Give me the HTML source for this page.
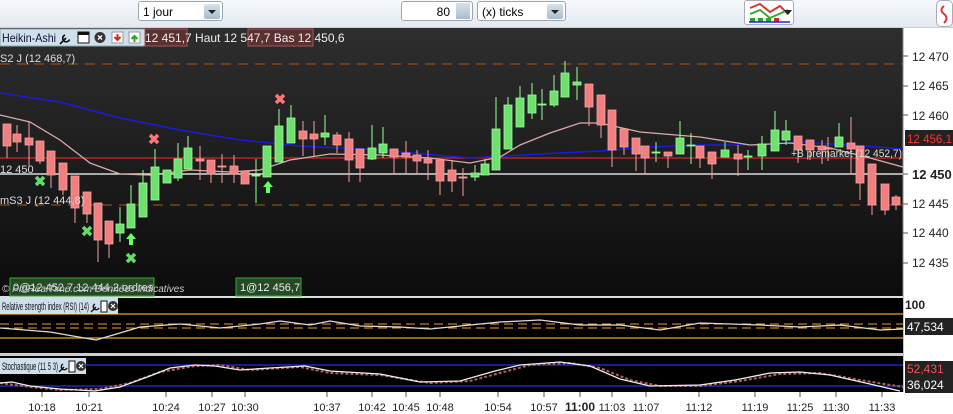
<!DOCTYPE html>
<html><head><meta charset="utf-8"><style>
body{margin:0;width:953px;height:414px;overflow:hidden;background:#fff;font-family:"Liberation Sans",sans-serif;position:relative}
.tb{position:absolute;left:0;top:0;width:953px;height:28px;background:linear-gradient(#f6f9fc,#e3e9ef);border-bottom:1px solid #c8d0d8;box-sizing:border-box}
.sel{position:absolute;top:1px;height:20px;background:#fff;border:1px solid #9aa7b3;border-radius:3px;font-size:12px;line-height:20px;padding-left:4px;box-sizing:border-box}
.arr{position:absolute;right:2px;top:2px;width:16px;height:15px;background:linear-gradient(#d6e2ec,#a9bccc);border-radius:2px}
.arr:after{content:"";position:absolute;left:4px;top:6px;border:4px solid transparent;border-top:4px solid #222;border-bottom:none}
svg{position:absolute;left:0;top:0}
</style></head><body>
<div class="tb"></div>
<div class="sel" style="left:138px;width:85px">1 jour<div class="arr"></div></div>
<div class="sel" style="left:401px;width:72px;text-align:right;padding-right:22px">80<div style="position:absolute;right:2px;top:1px;width:14px;height:16px;background:linear-gradient(#d6e2ec,#a9bccc)"></div></div>
<div class="sel" style="left:477px;width:89px">(x) ticks<div class="arr"></div></div>
<div style="position:absolute;left:744px;top:0;width:50px;height:25px;background:#fff;border:1px solid #aab;border-radius:3px;box-sizing:border-box"></div>
<div style="position:absolute;left:936px;top:0;width:17px;height:27px;background:#fff;border:1px solid #aab;border-radius:5px;box-sizing:border-box"></div>
<svg id="s" width="953" height="414" xmlns="http://www.w3.org/2000/svg">
<defs><linearGradient id="bg" x1="0" y1="0" x2="0" y2="1"><stop offset="0" stop-color="#2e2e2e"/><stop offset="1" stop-color="#0c0c0c"/></linearGradient></defs>
<g>
<path d="M750 8 L760 4 L770 12 L780 6 L788 14" fill="none" stroke="#d33" stroke-width="2"/>
<path d="M750 14 L760 10 L770 18 L788 10" fill="none" stroke="#3a3" stroke-width="2"/>
<rect x="750" y="18" width="5" height="4" fill="#2a2"/><rect x="758" y="18" width="5" height="4" fill="#2a2"/><rect x="766" y="18" width="5" height="4" fill="#2a2"/><rect x="774" y="18" width="5" height="4" fill="#d22"/>
<line x1="749" y1="22" x2="790" y2="22" stroke="#22d" stroke-width="1.5"/>
<path d="M784 10 l8 0 l-4 5z" fill="#222"/>
<path d="M944 6 q-5 4 0 8 q5 4 0 9" fill="none" stroke="#d33" stroke-width="2"/>
</g>
<rect x="0" y="28" width="903" height="268" fill="url(#bg)"/>
<rect x="903" y="28" width="50" height="386" fill="#fff"/>
<line x1="903" y1="28" x2="903" y2="392" stroke="#888"/>
<g stroke="#555"><line x1="903" y1="56" x2="908" y2="56"/><line x1="903" y1="86" x2="908" y2="86"/><line x1="903" y1="115" x2="908" y2="115"/><line x1="903" y1="174" x2="908" y2="174"/><line x1="903" y1="204" x2="908" y2="204"/><line x1="903" y1="233" x2="908" y2="233"/><line x1="903" y1="263" x2="908" y2="263"/></g>
<rect x="0" y="296" width="903" height="96" fill="#000"/>
<rect x="0" y="296" width="903" height="2" fill="#ddd"/>
<rect x="0" y="353" width="903" height="3" fill="#ccc"/>
<rect x="0" y="392" width="953" height="22" fill="#fff"/>
<line x1="0" y1="64" x2="903" y2="64" stroke="#a85a10" stroke-dasharray="10,7"/>
<line x1="0" y1="205" x2="903" y2="205" stroke="#a85a10" stroke-dasharray="10,7"/>
<line x1="0" y1="158" x2="903" y2="158" stroke="#e02020" stroke-width="1.3"/>
<line x1="0" y1="174" x2="903" y2="174" stroke="#fff" stroke-width="1.3"/>
<polyline fill="none" stroke="#1a1ae0" stroke-width="1.5" points="0,93 60,102 120,118 180,130 240,140 300,146 380,150 470,158 540,154 600,151 650,147 700,145 760,145 800,142 850,145 903,149"/>
<polyline fill="none" stroke="#d9aaa8" stroke-width="1.3" points="0,115 30,122 60,140 90,163 120,174 150,175 190,170 230,172 260,170 290,160 330,154 380,155 430,158 470,163 500,157 520,145 550,133 580,123 600,123 640,132 700,137 750,145 790,143 830,148 870,158 903,167"/>
<g id="c"></g>
<g font-size="11" fill="#ddd">
<text x="0" y="62">S2 J (12 468,7)</text>
<text x="0" y="173">12 450</text>
<text x="0" y="204">mS3 J (12 444,8)</text>
<text x="791" y="157" textLength="111" lengthAdjust="spacingAndGlyphs">+B premarket (12 452,7)</text>
</g>
<rect x="0" y="29" width="145" height="17" fill="#cfe0ec" stroke="#8aa"/>
<text x="2" y="42" font-size="12" fill="#113" textLength="54" lengthAdjust="spacingAndGlyphs">Heikin-Ashi</text>
<g>
<path d="M60 44 l6 -6 m-1 -3 a3.5 3.5 0 1 0 4.5 4.5" stroke="#111" stroke-width="1.6" fill="none"/>
<rect x="78" y="32" width="11" height="11" fill="#fff" stroke="#111"/><rect x="78" y="32" width="11" height="3" fill="#111"/>
<circle cx="100" cy="37.5" r="5.5" fill="#333"/><path d="M98 35.5l4 4m0-4l-4 4" stroke="#fff" stroke-width="1.3"/>
<rect x="112" y="32" width="11" height="11" fill="#fff" stroke="#999"/><path d="M117.5 34v6m-3-3l3 3 3-3" stroke="#d22" stroke-width="2" fill="none"/>
<rect x="129" y="32" width="11" height="11" fill="#fff" stroke="#999"/><path d="M134.5 42v-6m-3 3l3-3 3 3" stroke="#2a2" stroke-width="2" fill="none"/>
</g>
<rect x="145" y="29" width="42" height="17" fill="#5a3030" stroke="#a55"/>
<rect x="248" y="29" width="65" height="17" fill="#5a3030" stroke="#a55"/>
<text x="145" y="42" font-size="12" fill="#eee">12 451,7 Haut 12 547,7 Bas 12 450,6</text>
<g font-size="12" fill="#222">
<text x="912" y="61">12 470</text><text x="912" y="90">12 465</text><text x="912" y="120">12 460</text>
<text x="912" y="179" font-weight="bold" font-size="13">12 450</text><text x="912" y="208">12 445</text><text x="912" y="237">12 440</text><text x="912" y="267">12 435</text>
<text x="905" y="309" font-weight="bold">100</text>
</g>
<rect x="905" y="130" width="48" height="16" fill="#222"/><text x="907" y="143" font-size="12" fill="#f33" textLength="45" lengthAdjust="spacingAndGlyphs">12 456,1</text>
<rect x="10" y="278" width="144" height="18" fill="#264a26" stroke="#3a3"/>
<rect x="236" y="278" width="65" height="18" fill="#264a26" stroke="#3a3"/>
<text x="13" y="291" font-size="11" fill="#dde">0@12 452,7 12 444,2 ordres</text>
<text x="240" y="291" font-size="11" fill="#eee">1@12 456,7</text>
<text x="2" y="292" font-size="10" fill="#ccc" font-style="italic">© ProRealTime.com  Données indicatives</text>
<line x1="0" y1="314" x2="903" y2="314" stroke="#f0a020" stroke-width="1.3"/>
<line x1="0" y1="338" x2="903" y2="338" stroke="#f0a020" stroke-width="1.3"/>
<line x1="0" y1="324" x2="903" y2="324" stroke="#f0a020" stroke-dasharray="9,5"/>
<line x1="0" y1="328" x2="903" y2="328" stroke="#f0a020" stroke-dasharray="9,5"/>
<polyline fill="none" stroke="#ddd" stroke-width="1.3" points="0,328 50,332 96,340 120,333 140,327 180,324 220,328 260,324 280,321 310,325 330,321 360,326 400,327 430,329 470,325 500,322 540,320 580,325 620,325 660,330 700,323 760,325 800,327 840,325 880,330 903,329"/>
<rect x="0" y="298" width="118" height="16" fill="#cfe0ec"/>
<text x="2" y="310" font-size="11" fill="#111" textLength="87" lengthAdjust="spacingAndGlyphs">Relative strength index (RSI) (14)</text>
<g>
<path d="M91 312 l5 -5 m-1 -3 a3 3 0 1 0 4 4" stroke="#111" stroke-width="1.4" fill="none"/>
<rect x="101" y="301" width="6" height="11" fill="#fff" stroke="#111"/>
<circle cx="113" cy="306" r="5" fill="#333"/><path d="M111 304l4 4m0-4l-4 4" stroke="#fff" stroke-width="1.2"/>
</g>
<rect x="905" y="318" width="48" height="17" fill="#222"/><text x="907" y="331" font-size="12" fill="#fff">47,534</text>
<line x1="0" y1="365" x2="903" y2="365" stroke="#2030e0" stroke-width="1.3"/>
<line x1="0" y1="386" x2="903" y2="386" stroke="#2030e0" stroke-width="1.3"/>
<polyline fill="none" stroke="#b06060" stroke-width="2" stroke-dasharray="3,2" points="0,383 30,387 60,390 100,389 130,383 160,372 195,366 220,365 250,370 300,367 330,373 380,375 430,383 470,381 500,373 530,365 570,363 600,368 630,380 660,386 700,386 740,381 780,374 820,373 860,380 903,387"/>
<polyline fill="none" stroke="#eee" stroke-width="1.3" points="0,383 12,382 30,386 60,389 95,391 120,387 150,376 170,368 195,365 215,366 240,370 270,368 305,366 330,371 380,374 420,382 460,381 495,371 520,365 560,362 590,366 620,379 650,386 700,385 735,380 770,373 800,372 830,375 870,384 900,391"/>
<rect x="0" y="358" width="86" height="16" fill="#cfe0ec"/>
<text x="2" y="370" font-size="11" fill="#111" textLength="56" lengthAdjust="spacingAndGlyphs">Stochastique (11 5 3)</text>
<g>
<path d="M59 372 l5 -5 m-1 -3 a3 3 0 1 0 4 4" stroke="#111" stroke-width="1.4" fill="none"/>
<rect x="69" y="361" width="6" height="11" fill="#fff" stroke="#111"/>
<circle cx="81" cy="366" r="5" fill="#333"/><path d="M79 364l4 4m0-4l-4 4" stroke="#fff" stroke-width="1.2"/>
</g>
<rect x="905" y="361" width="48" height="16" fill="#222"/><text x="907" y="373" font-size="12" fill="#e55">52,431</text>
<rect x="905" y="377" width="48" height="16" fill="#222"/><text x="907" y="389" font-size="12" fill="#fff">36,024</text>
<g font-size="11" fill="#222" text-anchor="middle" id="t"></g>
</svg>
<script>
var d=[[7,124,146,124,158],[17,134,142,125,152],[29,138,145,122,166],[40,141,161,141,164],[51,151,175,151,188],[63,163,190,163,195],[75,176,208,176,223],[87,192,214,192,223],[98,203,240,203,262],[109,221,244,221,258],
[120,233,224,207,242],[131,228,204,185,228],[143,217,183,170,217],[155,200,167,149,200],[167,183,170,170,183],[178,178,159,143,181],[188,169,148,136,169],[200,159,161,146,180],[211,160,174,160,183],[222,166,167,154,183],[234,166,174,155,183],[245,171,184,171,184],[256,176,175,159,203],[267,177,146,146,177],[279,162,126,109,162],[291,143,118,105,143],[303,131,139,121,156],[314,134,139,121,156],[325,137,133,115,145],[337,135,145,132,153],[349,139,160,132,182],[360,149,168,149,182],[372,159,148,125,160],[383,153,144,127,158],[394,149,157,149,175],[406,153,157,141,174],[417,155,161,150,174],[428,159,163,150,180],[440,160,181,160,195],[452,170,181,160,192],[463,177,178,168,196],[475,177,173,165,181],
[485,175,164,159,175],[496,170,129,97,170],[508,149,105,97,149],[520,127,98,86,127],[532,113,95,83,119],[542,105,104,89,120],[554,105,91,75,107],[565,97,73,61,97],[577,85,82,67,100],[589,84,107,84,126],[601,95,125,95,138],[612,110,150,110,167],[624,129,147,129,155],[636,138,154,138,171],[645,146,158,146,174],[656,153,152,142,162],[668,152,156,152,168],[680,154,138,121,154],[691,146,145,133,164],[700,146,158,146,168],[712,152,164,152,179],[725,157,150,142,157],[738,154,159,145,176],[748,157,156,150,170],[762,156,144,136,170],[775,151,130,111,151],[786,140,131,120,145],[798,136,150,136,163],[810,140,150,140,160],[822,146,150,140,164],[828,148,149,137,161],[839,147,137,123,147],[851,143,149,117,174],[860,146,183,146,200],[872,164,205,164,215],[885,184,210,184,215],[896,197,205,195,210]];
var h='';d.forEach(function(c){var up=c[2]<c[1];var fc=up?'#6fe06f':'#f08080',sc=up?'#9f9':'#f9a0a0',t=Math.min(c[1],c[2]),b=Math.max(c[1],c[2]);
h+='<line x1="'+c[0]+'" y1="'+c[3]+'" x2="'+c[0]+'" y2="'+c[4]+'" stroke="'+sc+'"/>';h+='<rect x="'+(c[0]-4)+'" y="'+t+'" width="8" height="'+Math.max(1,b-t)+'" fill="'+fc+'" stroke="'+sc+'" stroke-width="0.8"/>';});
function X(x,y,c){return '<path d="M'+(x-4)+' '+(y-4)+'L'+(x+4)+' '+(y+4)+'M'+(x+4)+' '+(y-4)+'L'+(x-4)+' '+(y+4)+'" stroke="'+c+'" stroke-width="3.5"/>';}
function A(x,y){return '<path d="M'+x+' '+(y-6)+'L'+(x+5)+' '+(y)+'L'+(x+2)+' '+y+'L'+(x+2)+' '+(y+6)+'L'+(x-2)+' '+(y+6)+'L'+(x-2)+' '+y+'L'+(x-5)+' '+y+'Z" fill="#6f6"/>';}
h+=X(40,181,'#6d6')+X(87,231,'#6d6')+X(131,258,'#6d6')+X(154,139,'#f77')+X(280,99,'#f77')+A(131,239)+A(268,187);
document.getElementById('c').innerHTML=h;
var t=[[42,'10:18'],[89,'10:21'],[166,'10:24'],[212,'10:27'],[245,'10:30'],[327,'10:37'],[372,'10:42'],[406,'10:45'],[440,'10:48'],[498,'10:54'],[544,'10:57'],[580,'11:00'],[612,'11:03'],[646,'11:07'],[699,'11:12'],[755,'11:19'],[800,'11:25'],[836,'11:30'],[882,'11:33']];
var s='';t.forEach(function(a){s+='<line x1="'+a[0]+'" y1="392" x2="'+a[0]+'" y2="397" stroke="#555"/><text x="'+a[0]+'" y="411"'+(a[1]=='11:00'?' font-weight="bold" font-size="12"':'')+'>'+a[1]+'</text>';});
document.getElementById('t').innerHTML=s;
</script>
</body></html>
